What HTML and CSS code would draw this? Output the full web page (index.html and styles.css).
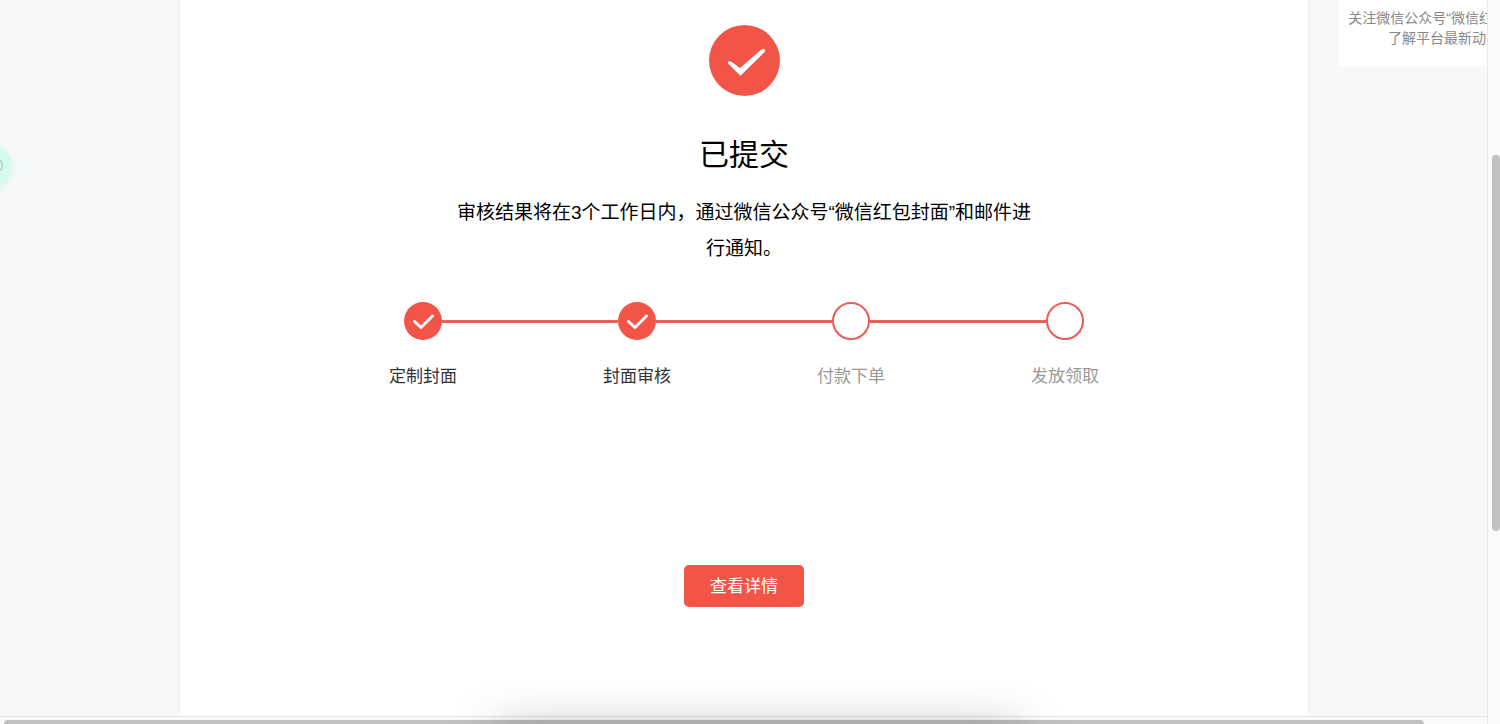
FILE: index.html
```
<!DOCTYPE html>
<html lang="zh-CN">
<head>
    <meta charset="UTF-8">
    <title>微信红包封面</title>
    <link rel="stylesheet" href="styles.css">
</head>
<body>
<div class="window">
    <div class="page">
        <main class="content">
            <svg class="success-icon" viewBox="0 0 70 70" aria-hidden="true">
                <circle cx="35" cy="35" r="35" fill="#f25547"/>
                <path d="M18.300 37.500 Q19.500 34.800 22 36.300 L30.500 42.500 L52 23.800 Q54.500 22.600 55.300 24.800 Q55.500 26 54.500 27 L31 50 Z" fill="#fff"/>
            </svg>
            <h1>已提交</h1>
            <p class="message">审核结果将在3个工作日内，通过微信公众号“微信红包封面”和邮件进行通知。</p>
            <ol class="steps">
                <li class="step done">
                    <div class="marker">
                        <span class="circle"><svg viewBox="0 0 38 38" aria-hidden="true"><path d="M10.500 19.500 L17 25.500 L28.500 14"/></svg></span>
                    </div>
                    <span class="label">定制封面</span>
                </li>
                <li class="step done">
                    <div class="marker">
                        <span class="circle"><svg viewBox="0 0 38 38" aria-hidden="true"><path d="M10.500 19.500 L17 25.500 L28.500 14"/></svg></span>
                    </div>
                    <span class="label">封面审核</span>
                </li>
                <li class="step">
                    <div class="marker"><span class="circle"></span></div>
                    <span class="label">付款下单</span>
                </li>
                <li class="step">
                    <div class="marker"><span class="circle"></span></div>
                    <span class="label">发放领取</span>
                </li>
            </ol>
            <button type="button" class="detail-button">查看详情</button>
        </main>
        <aside class="sidebar">
            <div class="follow-card">关注微信公众号“微信红包封面”<br>了解平台最新动态</div>
        </aside>
        <div class="float-ball">
            <svg viewBox="0 0 10 14" aria-hidden="true"><rect x="-1" y="1" width="7" height="11" rx="3.500"/></svg>
        </div>
    </div>
    <div class="scroll-y"><div class="thumb"></div></div>
    <div class="scroll-x"><div class="thumb"></div></div>
    <div class="dock"></div>
</div>
</body>
</html>
```
FILE: styles.css
```
* {
    box-sizing: border-box;
}
body {
    margin: 0;
    font-family: "Liberation Sans", "Noto Sans CJK SC", sans-serif;
    color: #000;
}
.window {
    position: relative;
    display: grid;
    grid-template-columns: minmax(0, 1fr) 13px;
    grid-template-rows: minmax(0, 1fr) 8px;
    height: 100vh;
    overflow: hidden;
    background-color: #fafafa;
}
.page {
    position: relative;
    display: grid;
    grid-template-columns: minmax(0, 1fr) 179px;
    padding-left: 180px;
    overflow: hidden;
    background-color: #f6f8fa;
}
.content {
    display: flex;
    flex-direction: column;
    align-items: center;
    padding-top: 25px;
    background-color: #fff;
    box-shadow: 0 0 3px #eee;
}
.success-icon {
    width: 71px;
    height: 71px;
}
h1 {
    margin: 37px 0 18px;
    font-size: 30px;
    font-weight: normal;
    line-height: 44px;
}
.message {
    max-width: 584px;
    margin: 0;
    font-size: 19px;
    line-height: 36px;
    text-align: center;
}
.steps {
    display: grid;
    grid-template-columns: repeat(4, 1fr);
    width: 100%;
    max-width: 856px;
    margin: 35px 0 0;
    padding: 0;
    list-style: none;
}
.step {
    display: flex;
    flex-direction: column;
    gap: 25px;
    text-align: center;
    color: #999;
}
.step.done {
    color: #333;
}
.marker {
    display: flex;
    align-items: center;
}
.marker::before,
.marker::after {
    content: "";
    flex: 1;
    height: 3px;
    background-color: #ee5f5b;
}
.step:first-child .marker::before,
.step:last-child .marker::after {
    background-color: transparent;
}
.circle {
    width: 38px;
    height: 38px;
    border: 2px solid #ee5a55;
    border-radius: 50%;
}
.done .circle {
    border: none;
    background-color: #f25547;
}
.circle svg {
    display: block;
    fill: none;
    stroke: #fff;
    stroke-width: 3;
    stroke-linecap: round;
}
.label {
    font-size: 17px;
    line-height: 24px;
}
.detail-button {
    width: 120px;
    height: 42px;
    margin-top: 176px;
    padding: 0 0 3px;
    border: none;
    border-radius: 5px;
    background-color: #f25547;
    color: #fff;
    font-family: inherit;
    font-size: 17px;
    cursor: pointer;
}
.sidebar {
    padding-left: 31px;
}
.follow-card {
    width: 210px;
    padding: 8px 0 18px;
    background-color: #fff;
    color: #888;
    font-size: 14px;
    line-height: 20px;
    text-align: center;
    white-space: nowrap;
}
.float-ball {
    position: absolute;
    top: 144px;
    left: -32px;
    width: 44px;
    height: 44px;
    border-radius: 50%;
    background-color: #d4fbec;
    box-shadow: 0 2px 6px #dff0ea;
}
.float-ball svg {
    display: block;
    width: 10px;
    height: 14px;
    margin: 15px 0 0 28px;
    fill: none;
    stroke: #a3bdb4;
}
.scroll-y {
    grid-row: 1 / 3;
    grid-column: 2;
    padding-left: 4px;
    border-left: 1px solid #e8e8e8;
}
.scroll-y .thumb {
    height: 52%;
    margin-top: 155px;
    border-radius: 4px;
    background-color: #c1c1c1;
}
.scroll-x {
    grid-row: 2;
    grid-column: 1;
    padding-top: 3px;
    border-top: 1px solid #e8e8e8;
}
.scroll-x .thumb {
    width: 95.5%;
    height: 4px;
    margin-left: 4px;
    border-radius: 4px 4px 0 0;
    background-color: #c1c1c1;
}
/* only the dock's shadow reaches into the window */
.dock {
    position: absolute;
    top: 100%;
    left: 33%;
    right: 32%;
    height: 60px;
    margin-top: 8px;
    box-shadow: 0 0 50px rgba(0, 0, 0, 0.3);
}
```
